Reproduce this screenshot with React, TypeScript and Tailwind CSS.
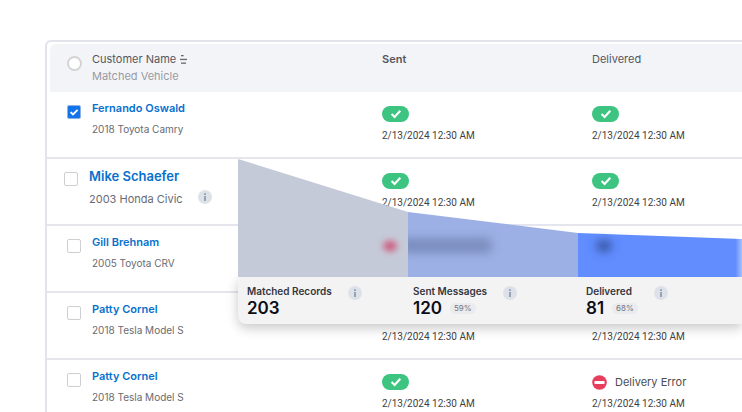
import type { ReactNode } from "react";

function CheckPill() {
  return (
    <span className="flex h-4 w-[27px] items-center justify-center rounded-full bg-[#3cc480]">
      <svg viewBox="0 0 12 10" className="h-[10px] w-3" fill="none" role="img" aria-label="Success">
        <path d="M1.6 5 4.6 8 10.3 1.8" stroke="#fff" strokeWidth="2.1" />
      </svg>
    </span>
  );
}

function InfoButton({ label }: { label: string }) {
  return (
    <button type="button" aria-label={label} className="block h-[14px] w-[14px] shrink-0">
      <svg viewBox="0 0 14 14" className="h-full w-full">
        <circle cx="7" cy="7" r="7" fill="#dee1e8" />
        <rect x="6" y="3.2" width="2" height="1.8" fill="#93a5bd" />
        <rect x="6" y="6" width="2" height="5" fill="#93a5bd" />
      </svg>
    </button>
  );
}

function ErrorStatus() {
  return (
    <span className="flex h-4 items-center gap-2 text-[11px] text-[#4d4d4d]">
      <svg viewBox="0 0 15 15" className="h-[15px] w-[15px]" aria-hidden="true">
        <circle cx="7.5" cy="7.5" r="7.3" fill="#e63f5d" />
        <rect x="2.4" y="5.9" width="10.2" height="3.2" rx="0.8" fill="#fff" />
      </svg>
      Delivery Error
    </span>
  );
}

type Status = "ok" | "error" | "none" | "pending";

function StatusCell({ status }: { status: Status }) {
  return (
    <td className="border-b-2 border-[#e4e5ed] p-0 align-top">
      {status !== "none" && (
        <div className="flex flex-col gap-[6px] pt-[14px]">
          {status === "ok" && <CheckPill />}
          {status === "error" && <ErrorStatus />}
          {status === "pending" && <span className="h-4" />}
          <time
            dateTime="2024-02-13T00:30"
            className="font-['Roboto','Noto_Sans',sans-serif] text-[10px] leading-4 text-[#3f3f3f]"
          >
            2/13/2024 12:30 AM
          </time>
        </div>
      )}
    </td>
  );
}

type Row = {
  id: string;
  name: string;
  vehicle: string;
  checked?: boolean;
  active?: boolean;
  sent: Status;
  delivered: Status;
};

const rows: Row[] = [
  { id: "r1", name: "Fernando Oswald", vehicle: "2018 Toyota Camry", checked: true, sent: "ok", delivered: "ok" },
  { id: "r2", name: "Mike Schaefer", vehicle: "2003 Honda Civic", active: true, sent: "ok", delivered: "ok" },
  { id: "r3", name: "Gill Brehnam", vehicle: "2005 Toyota CRV", sent: "none", delivered: "none" },
  { id: "r4", name: "Patty Cornel", vehicle: "2018 Tesla Model S", sent: "pending", delivered: "pending" },
  { id: "r5", name: "Patty Cornel", vehicle: "2018 Tesla Model S", sent: "ok", delivered: "error" },
];

function RowCheckbox({ row }: { row: Row }) {
  return (
    <span className="grid h-[14px] w-[14px]">
      <input
        id={row.id}
        type="checkbox"
        defaultChecked={row.checked}
        className="peer col-start-1 row-start-1 h-[14px] w-[14px] appearance-none rounded-[2px] border border-[#cfcfd2] bg-white checked:border-[#8fb2e0] checked:bg-[#1273eb]"
      />
      <svg
        viewBox="0 0 14 14"
        className="pointer-events-none invisible col-start-1 row-start-1 h-[14px] w-[14px] peer-checked:visible"
        fill="none"
        aria-hidden="true"
      >
        <path d="M3.6 7.2 6 9.5 10.6 4.8" stroke="#fff" strokeWidth="1.8" />
      </svg>
    </span>
  );
}

function CustomerCell({ row }: { row: Row }) {
  return (
    <td className="h-[67px] border-b-2 border-[#e4e5ed] p-0 align-top">
      <div className={`flex items-start gap-[11px] ${row.active ? "pl-[17px]" : "pl-5"}`}>
        <div className="pt-[13px]">
          <RowCheckbox row={row} />
        </div>
        <div className="pt-2">
          <label
            htmlFor={row.id}
            className={`block font-semibold leading-4 text-[#0770cd] ${row.active ? "pt-[1px] text-[13px]" : "text-[11px]"}`}
          >
            {row.name}
          </label>
          <div className={`leading-4 text-[#696b72] ${row.active ? "pt-[7px] text-[11px]" : "pt-[5px] text-[10px]"}`}>
            {row.vehicle}
          </div>
        </div>
        {row.active && (
          <div className="pl-1 pt-[31px]">
            <InfoButton label="Vehicle details" />
          </div>
        )}
      </div>
    </td>
  );
}

function HeadText({ children }: { children: ReactNode }) {
  return <div className="pt-[7px] text-[11px] leading-4 text-[#55575c]">{children}</div>;
}

function CustomerTable() {
  return (
    <table className="w-full table-fixed border-separate border-spacing-0 text-left">
      <colgroup>
        <col className="w-[335px]" />
        <col className="w-[210px]" />
        <col />
      </colgroup>
      <thead>
        <tr>
          <th className="h-[50px] rounded-tl-lg border-l-3 border-t-2 border-white bg-[#f3f4f8] bg-clip-padding p-0 align-top font-normal">
            <div className="flex gap-[10px] pl-[17px]">
              <input
                type="radio"
                aria-label="Select all customers"
                className="mt-3 h-[15px] w-[15px] appearance-none rounded-full border-2 border-[#d4d4d6] bg-white"
              />
              <div>
                <div className="flex items-end gap-1">
                  <HeadText>Customer Name</HeadText>
                  <button type="button" aria-label="Sort" className="mb-[3px] h-[9px] w-[7px]">
                    <svg viewBox="0 0 7 9" className="h-full w-full" fill="#66686e">
                      <rect x="1" y="0" width="2.6" height="1.3" />
                      <rect x="0" y="3.8" width="7" height="1.3" />
                      <rect x="1" y="7.5" width="5" height="1.3" />
                    </svg>
                  </button>
                </div>
                <div className="text-[11px] leading-[18px] text-[#999ba3]">Matched Vehicle</div>
              </div>
            </div>
          </th>
          <th className="border-t-2 border-white bg-[#f3f4f8] bg-clip-padding p-0 align-top font-semibold">
            <HeadText>Sent</HeadText>
          </th>
          <th className="border-t-2 border-white bg-[#f3f4f8] bg-clip-padding p-0 align-top font-normal">
            <HeadText>Delivered</HeadText>
          </th>
        </tr>
      </thead>
      <tbody>
        {rows.map((row) => (
          <tr key={row.id}>
            <CustomerCell row={row} />
            <StatusCell status={row.sent} />
            <StatusCell status={row.delivered} />
          </tr>
        ))}
      </tbody>
    </table>
  );
}

function Stat({ label, value, percent }: { label: string; value: string; percent?: string }) {
  return (
    <div className="flex items-start gap-4">
      <div>
        <div className="text-[10px] font-semibold leading-[14px] text-[#34363f]">{label}</div>
        <div className="flex items-center gap-2">
          <span className="text-[17px] font-semibold leading-5 text-[#0c0d18]">{value}</span>
          {percent && (
            <span className="rounded-full bg-[#eaebef] px-1 text-[8px] leading-[11px] text-[#73757d]">{percent}</span>
          )}
        </div>
      </div>
      <div className="pt-[2px]">
        <InfoButton label={`About ${label}`} />
      </div>
    </div>
  );
}

function Funnel() {
  return (
    <section aria-label="Message funnel" className="absolute left-[238px] right-0 top-[158px]">
      <svg viewBox="0 0 504 119" preserveAspectRatio="none" className="block h-[119px] w-full" aria-hidden="true">
        <defs>
          <filter id="soft" x="-100%" y="-150%" width="300%" height="400%">
            <feGaussianBlur stdDeviation="3" />
          </filter>
          <filter id="softer" x="-100%" y="-150%" width="300%" height="400%">
            <feGaussianBlur stdDeviation="5" />
          </filter>
          <linearGradient id="edge" x1="0" x2="1" y1="0" y2="0">
            <stop offset="0.96" stopColor="#618dff" />
            <stop offset="1" stopColor="#a9c0ff" />
          </linearGradient>
          <clipPath id="middle">
            <path d="M170 54 340 75V119H170Z" />
          </clipPath>
        </defs>
        <path d="M0 1 170 54V119H0Z" fill="#c5cad8" />
        <path d="M170 54 340 75V119H170Z" fill="#9cb0e5" />
        <path d="M340 75 504 81V119H340Z" fill="url(#edge)" />
        <ellipse cx="152" cy="88" rx="7" ry="5.5" fill="#cd5f80" filter="url(#soft)" />
        <g clipPath="url(#middle)">
          <rect x="162" y="80" width="92" height="15" rx="6" fill="#7284b4" opacity="0.8" filter="url(#softer)" />
        </g>
        <ellipse cx="366" cy="88" rx="8" ry="6" fill="#34529e" filter="url(#softer)" />
      </svg>
      <div className="grid grid-cols-[166px_173px_1fr] rounded-bl-lg bg-[#f3f3f3] pb-[6px] pl-[9px] pt-[7px] shadow-[0_4px_12px_rgba(0,0,0,0.22)]">
        <Stat label="Matched Records" value="203" />
        <Stat label="Sent Messages" value="120" percent="59%" />
        <Stat label="Delivered" value="81" percent="68%" />
      </div>
    </section>
  );
}

export default function App() {
  return (
    <main className="relative h-screen overflow-hidden bg-white pl-[45px] pt-10 font-['Inter','Noto_Sans',sans-serif]">
      <div className="rounded-tl-md border-l-2 border-t-2 border-[#e2e3eb]">
        <CustomerTable />
      </div>
      <Funnel />
    </main>
  );
}
